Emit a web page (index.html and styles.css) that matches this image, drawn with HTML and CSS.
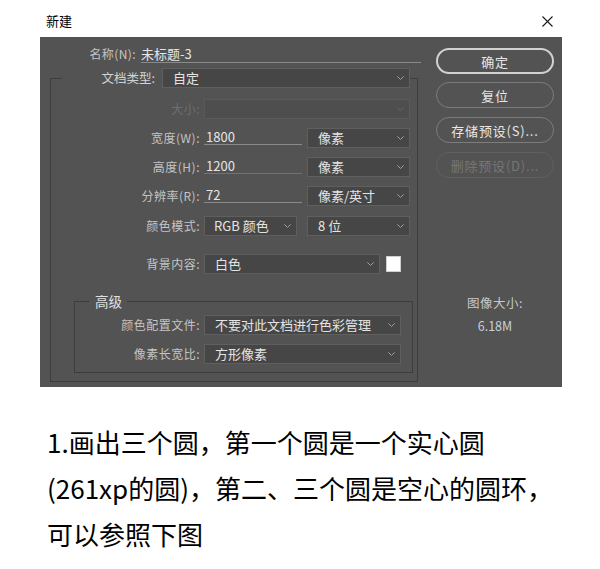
FILE: index.html
```html
<!DOCTYPE html>
<html lang="zh-CN">
<head>
<meta charset="utf-8">
<title>新建</title>
<link rel="stylesheet" href="styles.css">
</head>
<body>
<div class="titlebar">
  <span class="title">新建</span>
  <svg class="close" width="11" height="11" viewBox="0 0 11 11"><path d="M0.5 0.5 L10.5 10.5 M10.5 0.5 L0.5 10.5" stroke="#1a1a1a" stroke-width="1.1" fill="none"/></svg>
</div>

<div class="panel">
  <div class="left">
    <div class="name-row">
      <span class="name-label">名称(N):</span>
      <span class="name-input">未标题-3</span>
    </div>

    <fieldset class="outer">
      <legend class="doc-legend">
        <span class="doc-label">文档类型:</span>
        <span class="select doc-select"><span>自定</span><svg class="chev" width="7" height="4" viewBox="0 0 7 4"><path d="M0.3 0.3 L3.5 3.5 L6.7 0.3" fill="none" stroke="#a8a8a8" stroke-width="0.9"/></svg></span>
      </legend>

      <div class="row first">
        <span class="label disabled">大小:</span>
        <span class="select disabled-select w-full"><span></span><svg class="chev" width="7" height="4" viewBox="0 0 7 4"><path d="M0.3 0.3 L3.5 3.5 L6.7 0.3" fill="none" stroke="#666" stroke-width="0.9"/></svg></span>
      </div>

      <div class="row">
        <span class="label">宽度(W):</span>
        <span class="input">1800</span>
        <span class="select w-unit"><span>像素</span><svg class="chev" width="7" height="4" viewBox="0 0 7 4"><path d="M0.3 0.3 L3.5 3.5 L6.7 0.3" fill="none" stroke="#a8a8a8" stroke-width="0.9"/></svg></span>
      </div>

      <div class="row">
        <span class="label">高度(H):</span>
        <span class="input active">1200</span>
        <span class="select w-unit"><span>像素</span><svg class="chev" width="7" height="4" viewBox="0 0 7 4"><path d="M0.3 0.3 L3.5 3.5 L6.7 0.3" fill="none" stroke="#a8a8a8" stroke-width="0.9"/></svg></span>
      </div>

      <div class="row">
        <span class="label">分辨率(R):</span>
        <span class="input">72</span>
        <span class="select w-unit"><span>像素/英寸</span><svg class="chev" width="7" height="4" viewBox="0 0 7 4"><path d="M0.3 0.3 L3.5 3.5 L6.7 0.3" fill="none" stroke="#a8a8a8" stroke-width="0.9"/></svg></span>
      </div>

      <div class="row mode">
        <span class="label">颜色模式:</span>
        <span class="select w-mode"><span>RGB 颜色</span><svg class="chev" width="7" height="4" viewBox="0 0 7 4"><path d="M0.3 0.3 L3.5 3.5 L6.7 0.3" fill="none" stroke="#a8a8a8" stroke-width="0.9"/></svg></span>
        <span class="select w-unit"><span>8 位</span><svg class="chev" width="7" height="4" viewBox="0 0 7 4"><path d="M0.3 0.3 L3.5 3.5 L6.7 0.3" fill="none" stroke="#a8a8a8" stroke-width="0.9"/></svg></span>
      </div>

      <div class="row bg">
        <span class="label">背景内容:</span>
        <span class="select w-bg"><span>白色</span><svg class="chev" width="7" height="4" viewBox="0 0 7 4"><path d="M0.3 0.3 L3.5 3.5 L6.7 0.3" fill="none" stroke="#a8a8a8" stroke-width="0.9"/></svg></span>
        <span class="swatch"></span>
      </div>

      <fieldset class="inner">
        <legend class="adv-legend">高级</legend>
        <div class="row irow first-inner">
          <span class="label ilabel">颜色配置文件:</span>
          <span class="select w-inner"><span>不要对此文档进行色彩管理</span><svg class="chev" width="7" height="4" viewBox="0 0 7 4"><path d="M0.3 0.3 L3.5 3.5 L6.7 0.3" fill="none" stroke="#a8a8a8" stroke-width="0.9"/></svg></span>
        </div>
        <div class="row irow">
          <span class="label ilabel">像素长宽比:</span>
          <span class="select w-inner"><span>方形像素</span><svg class="chev" width="7" height="4" viewBox="0 0 7 4"><path d="M0.3 0.3 L3.5 3.5 L6.7 0.3" fill="none" stroke="#a8a8a8" stroke-width="0.9"/></svg></span>
        </div>
      </fieldset>
    </fieldset>
  </div>

  <div class="right">
    <div class="btn primary">确定</div>
    <div class="btn">复位</div>
    <div class="btn">存储预设(S)...</div>
    <div class="btn off">删除预设(D)...</div>
    <div class="size-title">图像大小:</div>
    <div class="size-value">6.18M</div>
  </div>
</div>

<p class="caption">1.画出三个圆，第一个圆是一个实心圆<br>(261xp的圆)，第二、三个圆是空心的圆环，<br>可以参照下图</p>
</body>
</html>
```

FILE: styles.css
```css
* { box-sizing: border-box; }

body {
  margin: 0;
  background: #ffffff;
  font-family: "Noto Sans CJK SC", "Noto Sans", sans-serif;
}

.titlebar {
  height: 37px;
  display: flex;
  justify-content: space-between;
  align-items: flex-start;
  padding: 13px 47px 0 46px;
}
.title {
  font-size: 13px;
  line-height: 16px;
  color: #000;
}
.close { margin-top: 3px; }

.panel {
  margin-left: 40px;
  width: 522px;
  height: 350px;
  background: #535353;
  display: flex;
  font-size: 12px;
  color: #c4c4c4;
}

.left {
  width: 381px;
  padding: 8px 0 0 10px;
}

.name-row {
  display: flex;
  gap: 5px;
  height: 18px;
  align-items: stretch;
}
.name-label {
  width: 86px;
  text-align: right;
  line-height: 18px;
  letter-spacing: 0.4px;
}
.name-input {
  width: 280px;
  border-bottom: 1px solid #8a8a8a;
  color: #e6e6e6;
  font-size: 13px;
  line-height: 18px;
}

.outer {
  margin: 5px 0 0 0;
  padding: 0 0 8px 0;
  width: 368px;
  border: 1px solid #3d3d3d;
  min-width: 0;
}
.doc-legend {
  padding: 0;
  margin-left: 11px;
  width: 348px;
  display: flex;
  gap: 7px;
  height: 20px;
}
.doc-label {
  width: 93px;
  text-align: right;
  line-height: 20px;
  font-size: 12.5px;
  color: #d2d2d2;
}
.doc-select { width: 248px; }

.row {
  display: flex;
  align-items: flex-start;
  height: 20px;
  margin-top: 9px;
}
.row.first { margin-top: 11px; }
.row.mode { margin-top: 10px; }
.row.bg { margin-top: 18px; }

.label {
  width: 149px;
  margin-right: 4px;
  text-align: right;
  line-height: 20px;
  letter-spacing: 0.5px;
}
.label.disabled { color: #6e6e6e; }

.select {
  height: 20px;
  background: #464646;
  border: 1px solid #5f5f5f;
  display: flex;
  justify-content: space-between;
  align-items: center;
  padding: 0 5px 0 10px;
  color: #e4e4e4;
  font-size: 13px;
  line-height: 18px;
  white-space: nowrap;
}
.select.disabled-select {
  background: #4e4e4e;
  border-color: #5a5a5a;
}
.chev { flex: none; }

.w-full { width: 206px; }
.w-unit { width: 103px; margin-left: 5px; }
.w-mode { width: 93px; padding-left: 9px; }
.row.mode .w-unit { margin-left: 10px; }
.w-bg { width: 176px; }
.w-inner { width: 197px; }

.input {
  width: 98px;
  height: 17px;
  border-bottom: 1px solid #8a8a8a;
  padding-left: 2px;
  color: #e6e6e6;
  font-size: 13px;
  line-height: 18px;
}
.input.active { border-bottom-color: #2f7fdc; }

.swatch {
  width: 15px;
  height: 16px;
  margin: 2px 0 0 6px;
  background: #ffffff;
  border: 1px solid #cfcfcf;
}

.inner {
  margin: 17px 4px 0 23px;
  padding: 0 0 8px 0;
  border: 1px solid #3d3d3d;
  min-width: 0;
}
.adv-legend {
  margin-left: 14px;
  padding: 0 5px 0 6px;
  height: 20px;
  line-height: 20px;
  font-size: 13.5px;
  color: #e0e0e0;
}
.row.first-inner { margin-top: 4px; }
.ilabel { width: 125px; }

.right {
  width: 126px;
  padding: 11px 0 0 0;
  display: flex;
  flex-direction: column;
  align-items: center;
  margin-left: 11px;
}
.btn {
  width: 118px;
  height: 26px;
  border: 1px solid #7c7c7c;
  border-radius: 13px;
  display: flex;
  align-items: center;
  justify-content: center;
  color: #e6e6e6;
  font-size: 13px;
  letter-spacing: 0.8px;
  margin-top: 9px;
}
.btn.primary {
  margin-top: 0;
  border: 2px solid #d2d2d2;
}
.btn.primary + .btn { margin-top: 8px; }
.btn.off {
  border-color: #606060;
  color: #767676;
}
.size-title {
  margin-top: 117px;
  line-height: 16px;
  font-size: 12.5px;
  color: #c8c8c8;
  letter-spacing: 0.5px;
}
.size-value {
  margin-top: 7px;
  line-height: 16px;
  font-size: 12.5px;
  color: #c8d0dc;
}

.caption {
  margin: 32px 0 0 0;
  padding-left: 47px;
  font-size: 26px;
  line-height: 46px;
  color: #000000;
}
```
